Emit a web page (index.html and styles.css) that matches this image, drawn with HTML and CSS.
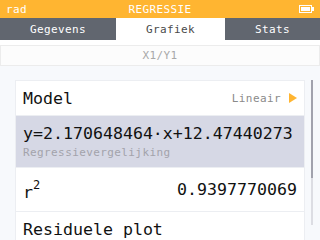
FILE: index.html
```html
<!DOCTYPE html>
<html lang="nl">
<head>
  <meta charset="UTF-8" />
  <title>Regressie - Grafiek</title>
  <link rel="stylesheet" href="styles.css">
</head>
<body>

<div class="screen">
  <header class="titlebar">
    <span class="unit">rad</span>
    <span class="title">REGRESSIE</span>
    <svg class="battery" width="15" height="8" viewBox="0 0 15 8">
      <rect x="0.5" y="0.5" width="12" height="7" fill="none" stroke="#fff"/>
      <rect x="2" y="2" width="9" height="4" fill="#fff"/>
      <rect x="13" y="2" width="2" height="4" fill="#fff"/>
    </svg>
  </header>

  <nav class="tabs">
    <div class="tab tab-data">Gegevens</div>
    <div class="tab tab-graph active">Grafiek</div>
    <div class="tab tab-stats">Stats</div>
  </nav>

  <div class="banner-wrap">
    <div class="banner">X1/Y1</div>
  </div>

  <main class="content">
    <div class="card">
      <div class="row row-model">
        <span class="label">Model</span>
        <span class="choice">Lineair <span class="arrow"></span></span>
      </div>
      <div class="row row-eq selected">
        <span class="label">y=2.170648464·x+12.47440273</span>
        <span class="sub">Regressievergelijking</span>
      </div>
      <div class="row row-r2">
        <span class="label">r<sup>2</sup></span>
        <span class="value">0.9397770069</span>
      </div>
      <div class="row row-plot">
        <span class="label">Residuele plot</span>
      </div>
    </div>
    <div class="scrollbar"><div class="thumb"></div></div>
  </main>
</div>

</body>
</html>
```

FILE: styles.css
```css
body {
  margin: 0;
  font-family: "DejaVu Sans Mono", monospace;
  background: #f7f9fc;
}
.screen {
  width: 320px;
  height: 240px;
  overflow: hidden;
  display: flex;
  flex-direction: column;
}
.titlebar {
  height: 18px;
  flex: none;
  background: #ffb531;
  color: white;
  font-size: 11px;
  letter-spacing: 0.4px;
  display: grid;
  grid-template-columns: 1fr auto 1fr;
  align-items: center;
  padding: 0 6px;
}
.battery {
  justify-self: end;
  display: block;
}
.tabs {
  height: 22px;
  flex: none;
  display: flex;
  background: #61666f;
  font-size: 11px;
  letter-spacing: 0.4px;
}
.tab {
  display: flex;
  align-items: center;
  justify-content: center;
  color: white;
}
.tab-data { width: 116px; }
.tab-graph { width: 109px; }
.tab-stats { width: 95px; }
.tab.active {
  background: white;
  color: #4a4a4a;
}
.banner-wrap {
  flex: none;
  background: white;
  padding-top: 5px;
}
.banner {
  height: 19px;
  border: 1px solid #ececec;
  background: #fcfcfc;
  color: #a8a8a8;
  font-size: 11px;
  letter-spacing: 0.4px;
  display: flex;
  align-items: center;
  justify-content: center;
}
.content {
  flex: 1;
  display: flex;
  align-items: flex-start;
  padding: 14px 0 0 15px;
  gap: 6px;
}
.card {
  width: 288px;
  background: white;
  border: 1px solid #eceef2;
  border-bottom: none;
  flex: none;
}
.row {
  display: flex;
  align-items: center;
  justify-content: space-between;
  padding: 0 7px;
  border-bottom: 1px solid #eceef2;
  font-size: 16.6px;
  color: #111;
}
.row-model { height: 34px; }
.row-eq {
  height: 51px;
  flex-direction: column;
  align-items: flex-start;
  justify-content: center;
}
.row-r2 { height: 43px; }
.row-plot { height: 34px; }
.selected {
  background: #d6d8e5;
}
.choice {
  font-size: 11px;
  letter-spacing: 0.4px;
  color: #8a8a8a;
  display: flex;
  align-items: center;
  gap: 8px;
}
.arrow {
  width: 0;
  height: 0;
  border-left: 8px solid #ffb531;
  border-top: 5px solid transparent;
  border-bottom: 5px solid transparent;
}
.sub {
  font-size: 11px;
  letter-spacing: 0.4px;
  color: #a3a3ab;
  margin-top: 3px;
}
.row-r2 sup {
  font-size: 12px;
  vertical-align: 9px;
}
.scrollbar {
  width: 2px;
  height: 145px;
  background: #dcdde3;
  flex: none;
}
.thumb {
  height: 98px;
  background: #a1a2ad;
}
```
